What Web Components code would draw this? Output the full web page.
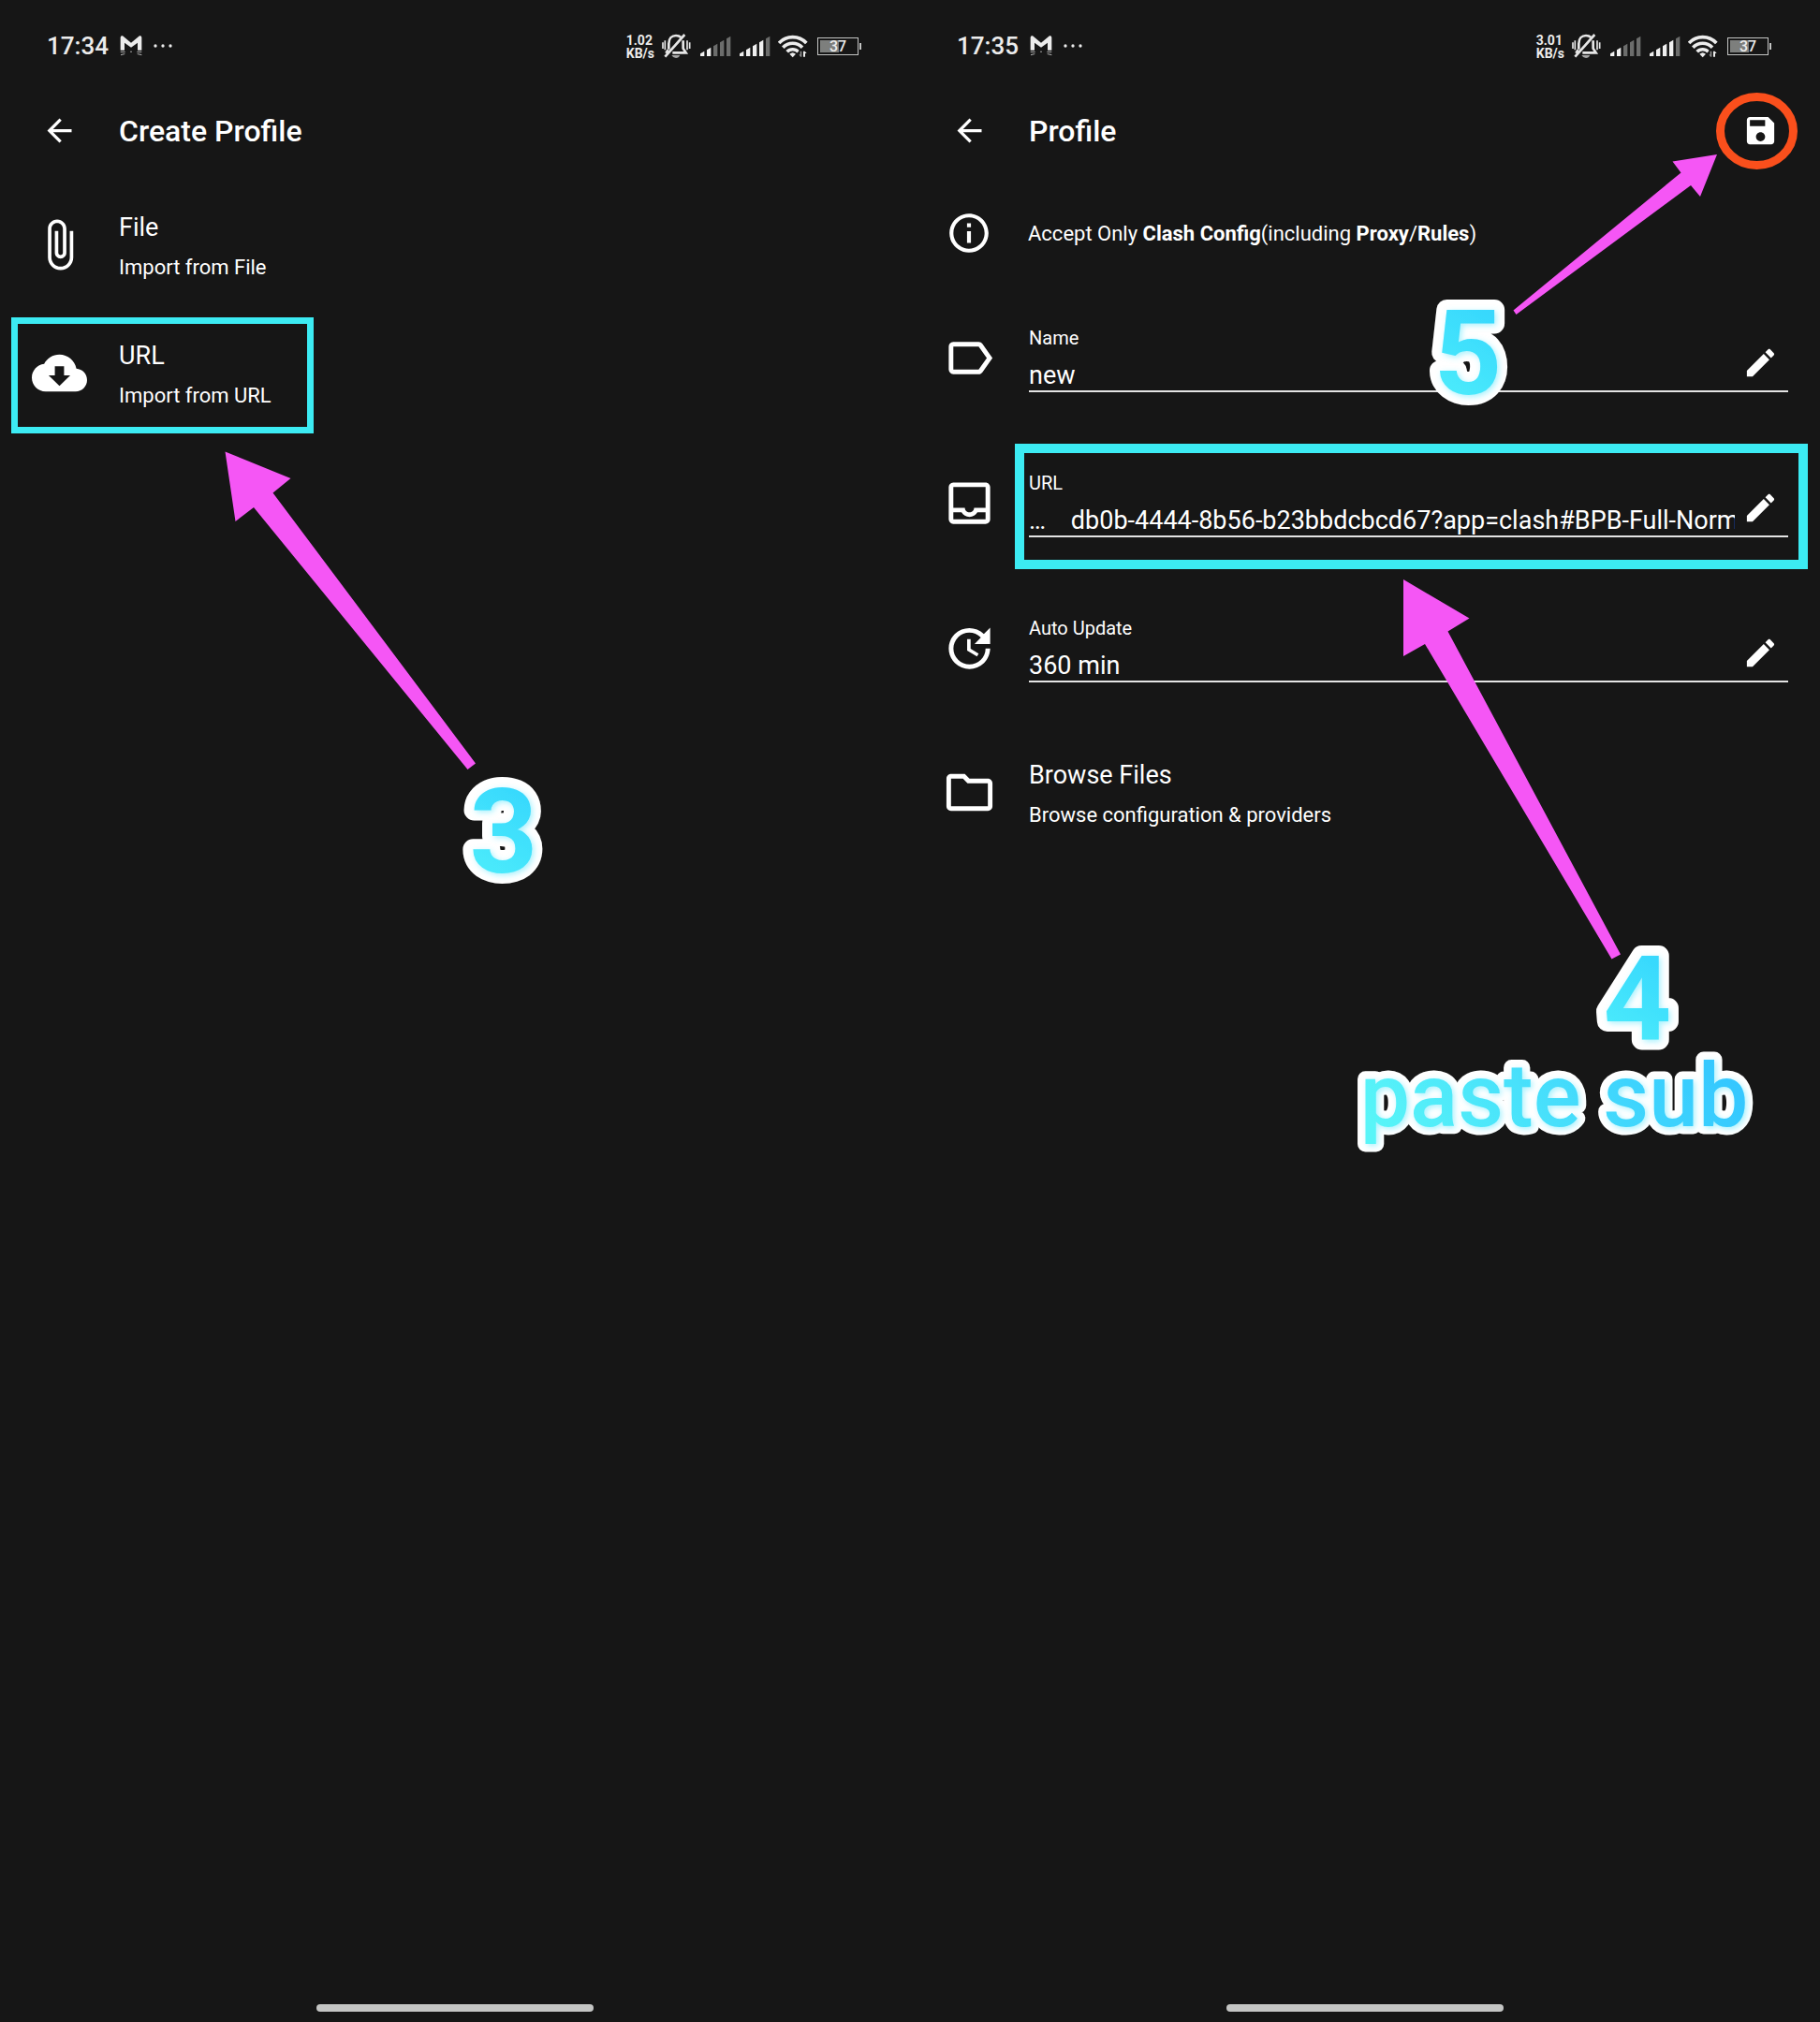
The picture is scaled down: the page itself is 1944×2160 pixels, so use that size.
<!DOCTYPE html>
<html lang="en">
<head>
<meta charset="utf-8">
<meta name="viewport" content="width=device-width, initial-scale=1">
<title>Create Profile</title>
<style>
  body {
    margin: 0;
    background: #161616;
    color: #fff;
    font-family: Roboto, "Liberation Sans", sans-serif;
    min-height: 100vh;
    display: grid;
    grid-template-columns: 1fr 1fr;
  }
</style>
</head>
<body>

<phone-screen>
  <status-bar slot="status" time="17:34" rate="1.02"></status-bar>
  <app-bar slot="bar" heading="Create Profile"></app-bar>
  <action-row icon="attach" heading="File" detail="Import from File"></action-row>
  <action-row icon="cloud" heading="URL" detail="Import from URL"></action-row>
  <guide-marks slot="marks" side="left">
    <svg width="972" height="1000" viewBox="0 0 972 1000">
      <defs>
        <linearGradient id="digit3" x1="0.2" y1="1" x2="0.5" y2="0.1">
          <stop offset="0" stop-color="#50f0fb"/><stop offset="1" stop-color="#37d8fd"/>
        </linearGradient>
        <filter id="shade3" x="-20%" y="-20%" width="140%" height="140%">
          <feDropShadow dx="2" dy="2" stdDeviation="3" flood-color="#4be4fc" flood-opacity="0.5"/>
        </filter>
      </defs>
      <rect x="15.5" y="342.5" width="316" height="117" fill="none" stroke="#3cebf3" stroke-width="7"/>
      <path fill="#f556f5" d="M240.5 482.5L310.5 511L291.5 526.5L508 815.5L499.5 822L271 542L251.5 557z"/>
      <g font-family="Roboto, sans-serif" font-weight="700" font-size="127" text-anchor="middle">
        <g fill="#fff" stroke="#fff" stroke-width="22" stroke-linejoin="round"><text id="t3" x="538" y="932">3</text></g>
        <use href="#t3" fill="url(#digit3)" filter="url(#shade3)"/>
      </g>
    </svg>
  </guide-marks>
</phone-screen>

<phone-screen>
  <status-bar slot="status" time="17:35" rate="3.01"></status-bar>
  <app-bar slot="bar" heading="Profile" save></app-bar>
  <info-row>Accept Only <b>Clash Config</b>(including <b>Proxy</b>/<b>Rules</b>)</info-row>
  <field-row icon="label" label="Name" value="new"></field-row>
  <field-row icon="inbox" label="URL" value="…    db0b-4444-8b56-b23bbdcbcd67?app=clash#BPB-Full-Norm"></field-row>
  <field-row icon="update" label="Auto Update" value="360 min"></field-row>
  <action-row icon="folder" heading="Browse Files" detail="Browse configuration &amp; providers" spaced></action-row>
  <guide-marks slot="marks" side="right">
    <svg width="972" height="1260" viewBox="972 0 972 1260">
      <defs>
        <linearGradient id="digit" x1="0.2" y1="1" x2="0.5" y2="0.1">
          <stop offset="0" stop-color="#50f0fb"/><stop offset="1" stop-color="#37d8fd"/>
        </linearGradient>
        <linearGradient id="word" x1="0" y1="0.6" x2="1" y2="0.4">
          <stop offset="0" stop-color="#58f5f8"/><stop offset="1" stop-color="#33c6ff"/>
        </linearGradient>
        <filter id="shade" x="-20%" y="-20%" width="140%" height="140%">
          <feDropShadow dx="2" dy="2" stdDeviation="3" flood-color="#4be4fc" flood-opacity="0.5"/>
        </filter>
      </defs>
      <rect x="1089" y="479" width="837" height="124" fill="none" stroke="#3cebf3" stroke-width="10"/>
      <ellipse cx="1876.5" cy="140" rx="39" ry="36.5" fill="none" stroke="#fa4f1c" stroke-width="9"/>
      <path fill="#f556f5" d="M1834 165L1816 210L1806 198L1619.5 336L1616.5 331.5L1795.5 184.5L1786.5 172.5z"/>
      <path fill="#f556f5" d="M1499 619L1569.5 660.5L1546.5 674.5L1731 1019.5L1721.5 1024.5L1522 688L1499 701z"/>
      <g font-family="Roboto, sans-serif" font-weight="700" font-size="127" text-anchor="middle">
        <g fill="#fff" stroke="#fff" stroke-width="22" stroke-linejoin="round">
          <text id="t5" x="1568" y="421">5</text>
          <text id="t4" x="1749" y="1111">4</text>
        </g>
        <use href="#t5" fill="url(#digit)" filter="url(#shade)"/>
        <use href="#t4" fill="url(#digit)" filter="url(#shade)"/>
      </g>
      <g font-family="Roboto, sans-serif" font-weight="500" font-size="95" text-anchor="middle">
        <g fill="#fff" stroke="#fff" stroke-width="17" stroke-linejoin="round"><text id="tp" x="1660" y="1203">paste sub</text></g>
        <use href="#tp" fill="url(#word)" filter="url(#shade)"/>
      </g>
    </svg>
  </guide-marks>
</phone-screen>

<script>
const ICONS = {
  back: 'M20 11H7.83l5.59-5.59L12 4l-8 8 8 8 1.41-1.41L7.83 13H20v-2z',
  attach: 'M16.5 6v11.5c0 2.21-1.79 4-4 4s-4-1.79-4-4V5c0-1.38 1.12-2.5 2.5-2.5s2.5 1.12 2.5 2.5v10.5c0 .55-.45 1-1 1s-1-.45-1-1V6H10v9.5c0 1.38 1.12 2.5 2.5 2.5s2.5-1.12 2.5-2.5V5c0-2.21-1.79-4-4-4S7 2.79 7 5v12.5c0 3.04 2.46 5.5 5.5 5.5s5.5-2.46 5.5-5.5V6h-1.5z',
  cloud: 'M19.35 10.04C18.67 6.59 15.64 4 12 4 9.11 4 6.6 5.64 5.35 8.04 2.34 8.36 0 10.91 0 14c0 3.31 2.69 6 6 6h13c2.76 0 5-2.24 5-5 0-2.64-2.05-4.78-4.65-4.96zM16.7 13l-4.7 4.6L7.3 13H10V9h4v4h2.7z',
  info: 'M11 7h2v2h-2zm0 4h2v6h-2zm1-9C6.48 2 2 6.48 2 12s4.48 10 10 10 10-4.48 10-10S17.52 2 12 2zm0 18c-4.41 0-8-3.59-8-8s3.59-8 8-8 8 3.59 8 8-3.59 8-8 8z',
  label: 'M17.63 5.84C17.27 5.33 16.67 5 16 5L5 5.01C3.9 5.01 3 5.9 3 7v10c0 1.1.9 1.99 2 1.99L16 19c.67 0 1.27-.33 1.63-.84L22 12l-4.37-6.16zM16 17H5V7h11l3.55 5L16 17z',
  inbox: 'M19 3H5c-1.1 0-2 .9-2 2v14c0 1.1.9 2 2 2h14c1.1 0 2-.9 2-2V5c0-1.1-.9-2-2-2zm0 16H5v-3h3.56c.69 1.19 1.97 2 3.45 2s2.75-.81 3.45-2H19v3zm0-5h-4.99c0 1.1-.9 2-2 2s-2-.9-2-2H5V5h14v9z',
  update: 'M21 10.12h-6.78l2.74-2.82c-2.73-2.7-7.15-2.8-9.88-.1-2.73 2.71-2.73 7.08 0 9.79s7.15 2.71 9.88 0C18.32 15.65 19 14.08 19 12.1h2c0 1.98-.88 4.55-2.64 6.29-3.51 3.48-9.21 3.48-12.72 0-3.5-3.47-3.53-9.11-.02-12.58s9.14-3.47 12.65 0L21 3v7.12zM12.5 8v4.25l3.5 2.08-.72 1.21L11 13V8h1.5z',
  folder: 'M9.17 6l2 2H20v10H4V6h5.17M10 4H4c-1.1 0-1.99.9-1.99 2L2 18c0 1.1.9 2 2 2h16c1.1 0 2-.9 2-2V8c0-1.1-.9-2-2-2h-8l-2-2z',
  edit: 'M3 17.25V21h3.75L17.81 9.94l-3.75-3.75L3 17.25zM20.71 7.04c.39-.39.39-1.02 0-1.41l-2.34-2.34c-.39-.39-1.02-.39-1.41 0l-1.83 1.83 3.75 3.75 1.83-1.83z',
  save: 'M17 3H5c-1.11 0-2 .9-2 2v14c0 1.1.89 2 2 2h14c1.1 0 2-.9 2-2V7l-4-4zm-5 16c-1.66 0-3-1.34-3-3s1.34-3 3-3 3 1.34 3 3-1.34 3-3 3zm3-10H5V5h10v4z'
};

class Base extends HTMLElement {
  connectedCallback() {
    if (this.shadowRoot) return;
    this.attachShadow({ mode: 'open' }).innerHTML = this.view();
  }
  a(name) { return (this.getAttribute(name) || '').replace(/&/g, '&amp;').replace(/"/g, '&quot;'); }
}

const RESET = `
  button { appearance: none; border: 0; margin: 0; padding: 0; background: none; color: inherit; font: inherit; text-align: left; cursor: pointer; }
`;

customElements.define('ui-icon', class extends Base {
  view() {
    return `<style>
      :host { display: block; flex: none; width: var(--icon-size, 59px); height: var(--icon-size, 59px); }
      svg { display: block; width: 100%; height: 100%; fill: currentColor; }
    </style><svg viewBox="0 0 24 24" aria-hidden="true"><path fill-rule="evenodd" d="${ICONS[this.a('name')]}"/></svg>`;
  }
});

customElements.define('phone-screen', class extends Base {
  view() {
    return `<style>
      :host { display: flex; flex-direction: column; position: relative; min-width: 0; }
      main { flex: 1; padding-top: 13px; }
      .home { align-self: center; width: 296px; height: 8px; border-radius: 4px; background: #c4c5c4; margin-bottom: 11px; }
    </style>
    <slot name="status"></slot><slot name="bar"></slot>
    <main><slot></slot></main>
    <div class="home"></div>
    <slot name="marks"></slot>`;
  }
});

customElements.define('signal-bars', class extends Base {
  view() {
    const level = Number(this.a('level'));
    let bars = '';
    for (let i = 0; i < 5; i++) {
      const x = 291 + i * 21, top = 108 - i * 12;
      bars += `<path fill="${i < level ? '#f0f0f0' : '#6c6d6c'}" d="M${x} ${top + 4}L${x + 13} ${top - 4}V120H${x}z"/>`;
    }
    return `<style>:host, svg { display: block; }</style>
      <svg width="34" height="26" viewBox="288 48 102 78" aria-hidden="true">${bars}</svg>`;
  }
});

customElements.define('status-bar', class extends Base {
  view() {
    return `<style>
      :host { display: flex; align-items: center; justify-content: space-between; height: 98px; padding: 0 52px 0 50px; color: #ececec; }
      .left, .right { display: flex; align-items: center; }
      .left { gap: 12px; font-size: 26px; font-weight: 500; line-height: 32px; }
      .right { gap: 8px; }
      .rate { font-size: 14px; font-weight: 700; line-height: 14px; padding-top: 2px; }
      svg { display: block; }
      .battery { display: flex; align-items: center; gap: 1px; }
      .cell { box-sizing: border-box; width: 44px; height: 19px; border: 1px solid #c4c5c4; padding: 2px; line-height: 13px; font-size: 16px; font-weight: 500; text-align: center;
        background: linear-gradient(#7d7f7d, #7d7f7d) 2px 2px / 20px 13px no-repeat; }
      .nub { width: 2px; height: 7px; background: #c4c5c4; }
    </style>
    <div class="left">
      <span>${this.a('time')}</span>
      <svg width="24" height="24" viewBox="0 0 72 72" fill="#ececec" aria-hidden="true">
        <path d="M2 10Q2 2 9 4L36 26L63 4Q70 2 70 10V50H57V26L36 41L15 26V50H2z"/>
        <path d="M2 54h15v3H2zM33 53h6v3h-6zM55 54h15v3H55zM3 63l13-3v3l-13 4zM70 63l-14-3v3l14 4z" fill="#a5a5a5"/>
      </svg>
      <svg width="22" height="6" viewBox="0 0 66 18" fill="#ececec" aria-hidden="true"><circle cx="6" cy="9" r="5"/><circle cx="30" cy="9" r="5"/><circle cx="54" cy="9" r="5"/></svg>
    </div>
    <div class="right">
      <div class="rate">${this.a('rate')}<br>KB/s</div>
      <svg width="32" height="26" viewBox="171 48 96 78" aria-hidden="true">
        <g fill="none" stroke="#e6e6e6" stroke-width="8">
          <path d="M193 98V80C193 63 203 54 216 54C223 54 228 56 232 60M239 70V95L248 109H205M191 100L184 110"/>
          <path d="M181 122L244 51"/>
          <path stroke-width="5" d="M174 76v20M181 70v30M252 70v30M260 76v20"/>
        </g>
        <path fill="#a5a5a5" d="M202 117h27q-4 9-13 9t-14-9z"/>
      </svg>
      <signal-bars level="2"></signal-bars>
      <signal-bars level="4"></signal-bars>
      <svg width="34" height="26" viewBox="541 48 102 78" aria-hidden="true">
        <g fill="none" stroke="#ececec" stroke-width="11">
          <path d="M544 78A60 60 0 0 1 632 78"/><path d="M557 92A43 43 0 0 1 619 92"/><path d="M570 106A25 25 0 0 1 606 106"/>
        </g>
        <path fill="#ececec" d="M578 113Q588 104 598 113L588 124z"/>
        <path stroke="#161616" stroke-width="24" d="M620 100v24"/>
        <path fill="#8d8d8d" d="M617 104v18h-4l-5-7h4v-11z"/><path fill="#ececec" d="M622 122v-18h5l6 7h-5v11z"/>
      </svg>
      <div class="battery"><div class="cell">37</div><div class="nub"></div></div>
    </div>`;
  }
});

customElements.define('app-bar', class extends Base {
  view() {
    return `<style>${RESET}
      :host { display: flex; align-items: center; height: 82px; padding: 0 44px; --icon-size: 39px; }
      h1 { flex: 1; margin: 0 0 0 44px; padding-top: 2px; font-size: 32px; font-weight: 500; line-height: 40px; }
    </style>
    <button type="button" aria-label="Back"><ui-icon name="back"></ui-icon></button>
    <h1>${this.a('heading')}</h1>
    ${this.hasAttribute('save') ? '<button type="button" aria-label="Save"><ui-icon name="save"></ui-icon></button>' : ''}`;
  }
});

customElements.define('action-row', class extends Base {
  view() {
    return `<style>${RESET}
      :host { display: block; }
      :host([spaced]) { padding-top: 8px; }
      button { display: flex; align-items: center; width: 100%; height: 137px; padding: 0 34px; gap: 34px; }
      .text { display: flex; flex-direction: column; gap: 1px; padding-top: 6px; line-height: 42px; }
      .heading { font-size: 27px; }
      .detail { font-size: 22px; }
    </style>
    <button type="button"><ui-icon name="${this.a('icon')}"></ui-icon>
      <span class="text"><span class="heading">${this.a('heading')}</span><span class="detail">${this.a('detail')}</span></span>
    </button>`;
  }
});

customElements.define('info-row', class extends Base {
  view() {
    return `<style>
      :host { display: flex; align-items: center; height: 112px; padding: 0 34px 0 38px; gap: 38px; --icon-size: 50px; }
      p { margin: 0; padding-top: 2px; font-size: 22px; line-height: 32px; }
    </style><ui-icon name="info"></ui-icon><p><slot></slot></p>`;
  }
});

customElements.define('field-row', class extends Base {
  view() {
    return `<style>${RESET}
      :host { display: flex; align-items: center; height: 155px; padding: 0 34px; gap: 34px; }
      .field { flex: 1; align-self: flex-start; min-width: 0; margin-top: 40px; display: flex; align-items: flex-end; gap: 8px; padding-right: 10px; border-bottom: 2px solid #e4e4e4; }
      .text { flex: 1; min-width: 0; display: flex; flex-direction: column; gap: 8px; }
      label { font-size: 20px; line-height: 32px; }
      input { appearance: none; box-sizing: border-box; width: 100%; height: 32px; margin: 0; padding: 0; border: 0; outline: 0; background: none; color: inherit; font-family: inherit; font-size: 27px; line-height: 32px; }
      .edit { --icon-size: 39px; margin-bottom: 10px; }
    </style>
    <ui-icon name="${this.a('icon')}"></ui-icon>
    <div class="field">
      <div class="text"><label for="value">${this.a('label')}</label><input id="value" type="text" value="${this.a('value')}"></div>
      <button class="edit" type="button" aria-label="Edit ${this.a('label')}"><ui-icon name="edit"></ui-icon></button>
    </div>`;
  }
});

customElements.define('guide-marks', class extends Base {
  view() {
    return `<style>
      :host { display: block; position: absolute; top: 0; pointer-events: none; }
      :host([side="left"]) { left: 0; }
      :host([side="right"]) { right: 0; }
    </style><slot></slot>`;
  }
});
</script>
</body>
</html>
